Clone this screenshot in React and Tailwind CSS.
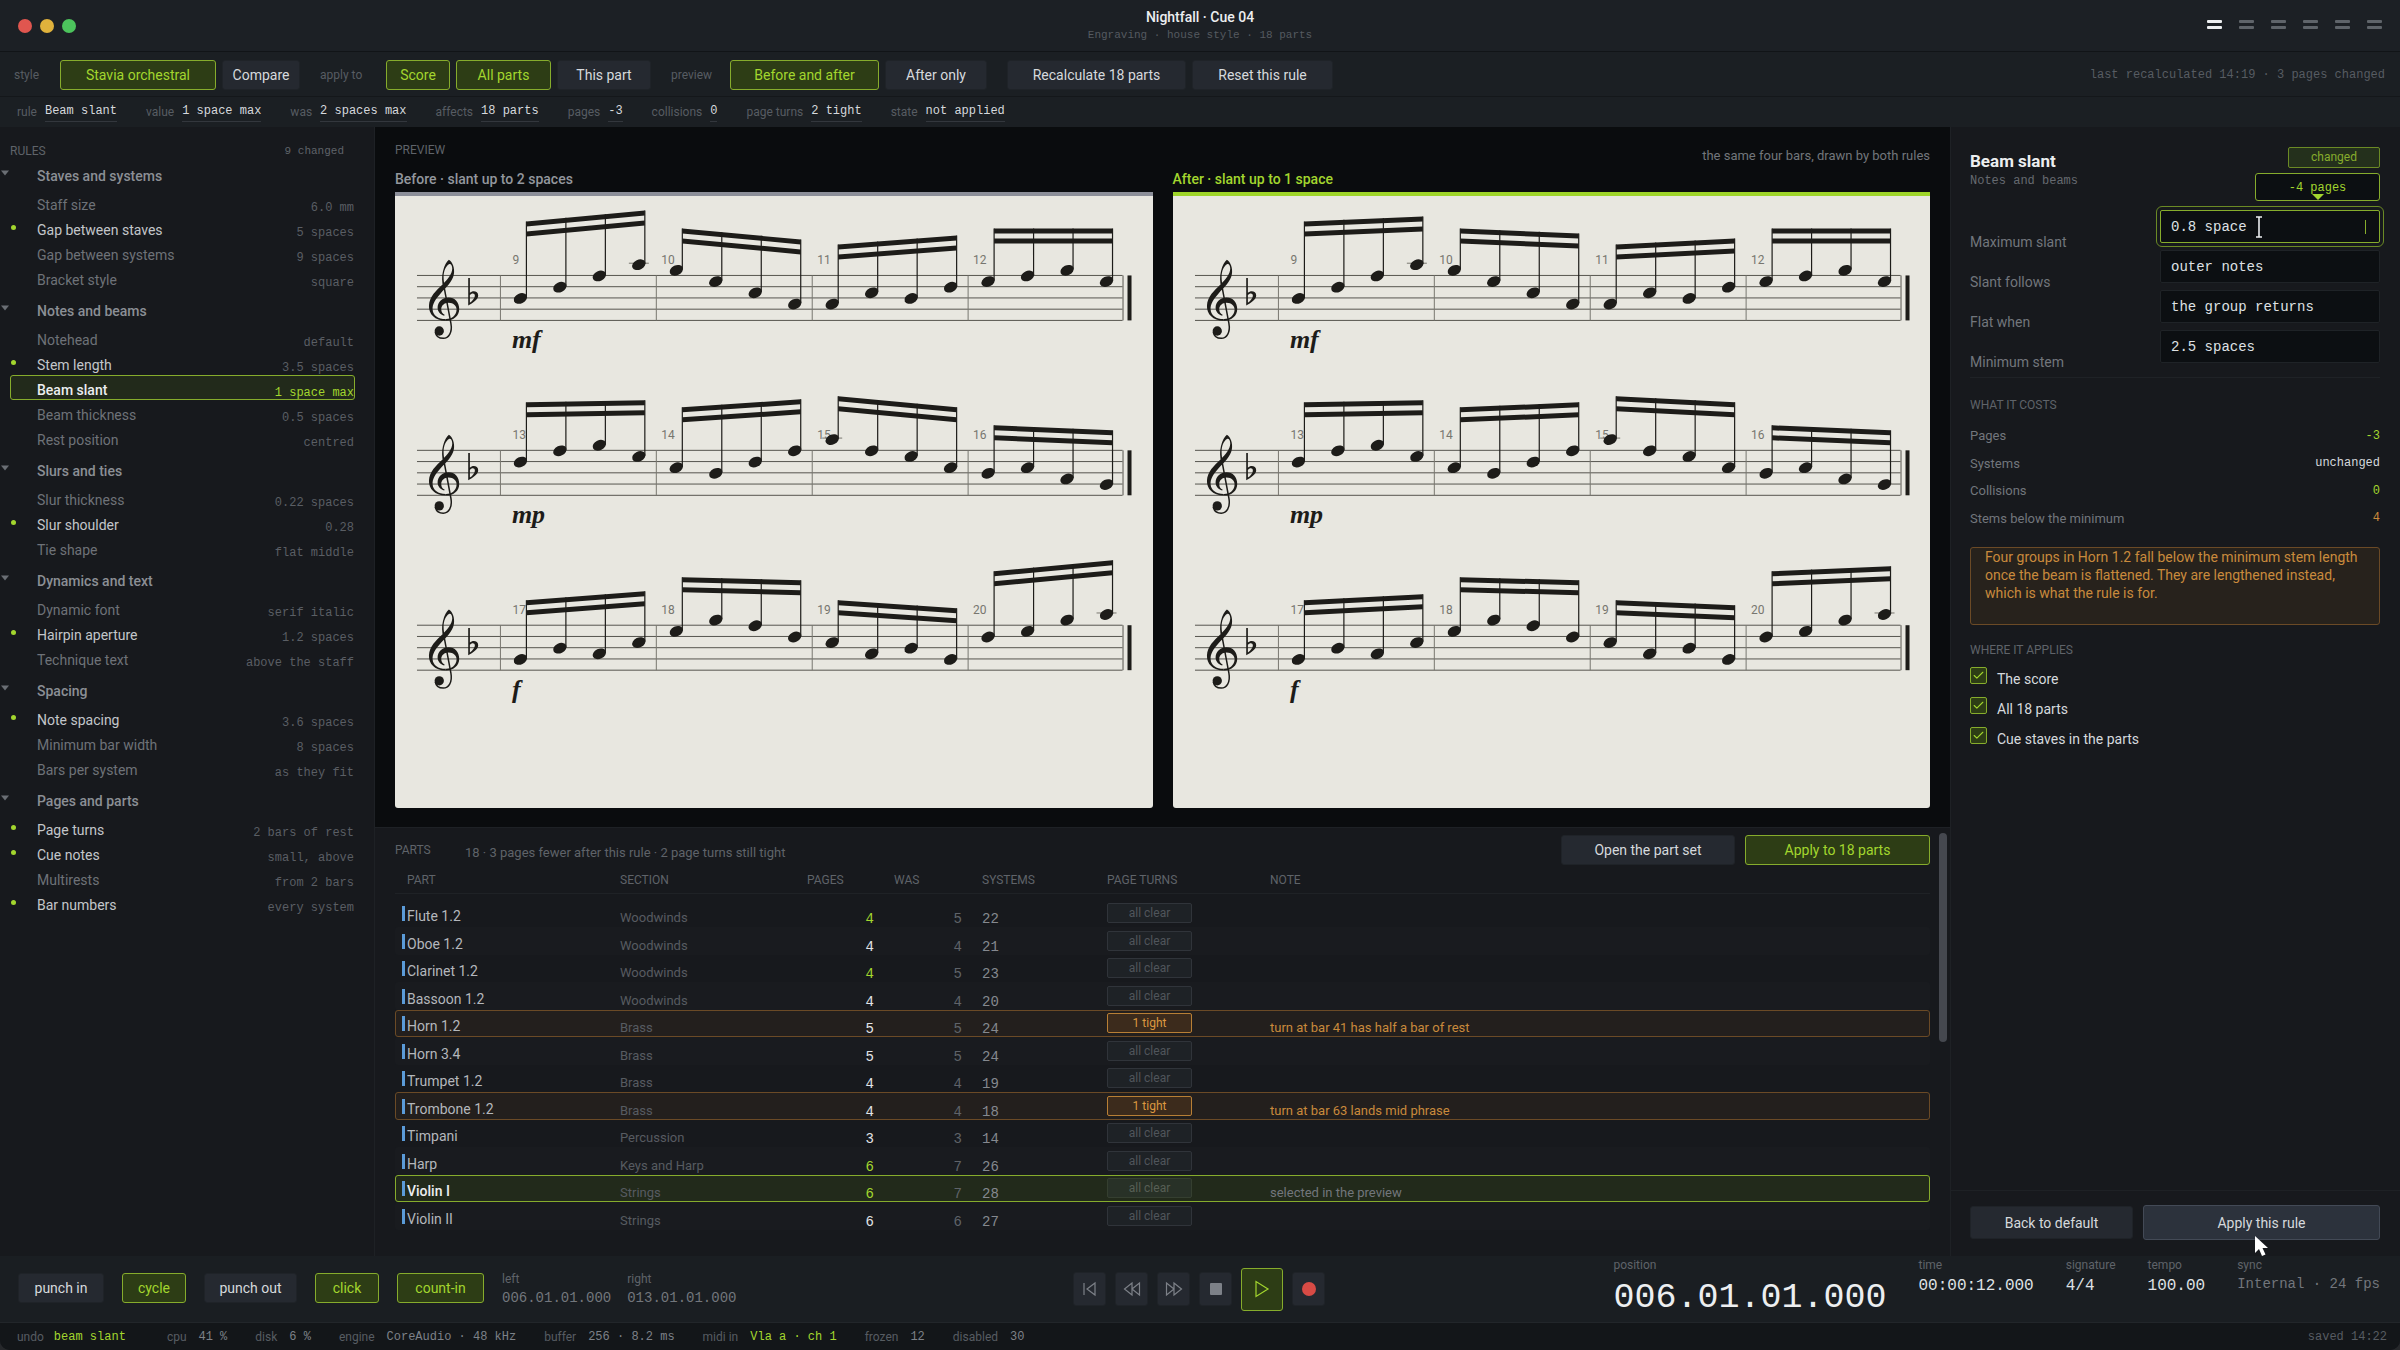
import { Check } from 'lucide-react';
import clsx from 'clsx';

const MONO = "font-['Liberation_Mono',monospace]";

const RULE_GROUPS = [
  {
    name: 'Staves and systems',
    rules: [
      { name: 'Staff size', value: '6.0 mm' },
      { name: 'Gap between staves', value: '5 spaces', changed: true },
      { name: 'Gap between systems', value: '9 spaces' },
      { name: 'Bracket style', value: 'square' },
    ],
  },
  {
    name: 'Notes and beams',
    rules: [
      { name: 'Notehead', value: 'default' },
      { name: 'Stem length', value: '3.5 spaces', changed: true },
      { name: 'Beam slant', value: '1 space max', selected: true },
      { name: 'Beam thickness', value: '0.5 spaces' },
      { name: 'Rest position', value: 'centred' },
    ],
  },
  {
    name: 'Slurs and ties',
    rules: [
      { name: 'Slur thickness', value: '0.22 spaces' },
      { name: 'Slur shoulder', value: '0.28', changed: true },
      { name: 'Tie shape', value: 'flat middle' },
    ],
  },
  {
    name: 'Dynamics and text',
    rules: [
      { name: 'Dynamic font', value: 'serif italic' },
      { name: 'Hairpin aperture', value: '1.2 spaces', changed: true },
      { name: 'Technique text', value: 'above the staff' },
    ],
  },
  {
    name: 'Spacing',
    rules: [
      { name: 'Note spacing', value: '3.6 spaces', changed: true },
      { name: 'Minimum bar width', value: '8 spaces' },
      { name: 'Bars per system', value: 'as they fit' },
    ],
  },
  {
    name: 'Pages and parts',
    rules: [
      { name: 'Page turns', value: '2 bars of rest', changed: true },
      { name: 'Cue notes', value: 'small, above', changed: true },
      { name: 'Multirests', value: 'from 2 bars' },
      { name: 'Bar numbers', value: 'every system', changed: true },
    ],
  },
];

// steps count up from the bottom staff line, beam heights are measured from the top line
const SYSTEMS = [
  {
    dynamic: 'mf',
    bars: [
      { number: 9, steps: [4, 6, 8, 10], left: -54, before: -65, after: -59 },
      { number: 10, steps: [9, 7, 5, 3], left: -47, before: -36, after: -42 },
      { number: 11, steps: [3, 5, 4, 6], left: -31, before: -40, after: -37 },
      { number: 12, steps: [7, 8, 9, 7], left: -47, before: -47, after: -47 },
    ],
  },
  {
    dynamic: 'mp',
    bars: [
      { number: 13, steps: [6, 8, 9, 7], left: -48, before: -50, after: -50 },
      { number: 14, steps: [5, 4, 6, 8], left: -43, before: -51, after: -48 },
      { number: 15, steps: [10, 8, 7, 5], left: -54, before: -43, after: -48 },
      { number: 16, steps: [4, 5, 3, 2], left: -25, before: -20, after: -20 },
    ],
  },
  {
    dynamic: 'f',
    bars: [
      { number: 17, steps: [2, 4, 3, 5], left: -25, before: -34, after: -31 },
      { number: 18, steps: [7, 9, 8, 6], left: -48, before: -45, after: -45 },
      { number: 19, steps: [5, 3, 4, 2], left: -25, before: -17, after: -20 },
      { number: 20, steps: [6, 7, 9, 10], left: -54, before: -65, after: -59 },
    ],
  },
];

const PARTS = [
  { name: 'Flute 1.2', section: 'Woodwinds', pages: 4, was: 5, systems: 22 },
  { name: 'Oboe 1.2', section: 'Woodwinds', pages: 4, was: 4, systems: 21 },
  { name: 'Clarinet 1.2', section: 'Woodwinds', pages: 4, was: 5, systems: 23 },
  { name: 'Bassoon 1.2', section: 'Woodwinds', pages: 4, was: 4, systems: 20 },
  { name: 'Horn 1.2', section: 'Brass', pages: 5, was: 5, systems: 24, tight: true, note: 'turn at bar 41 has half a bar of rest' },
  { name: 'Horn 3.4', section: 'Brass', pages: 5, was: 5, systems: 24 },
  { name: 'Trumpet 1.2', section: 'Brass', pages: 4, was: 4, systems: 19 },
  { name: 'Trombone 1.2', section: 'Brass', pages: 4, was: 4, systems: 18, tight: true, note: 'turn at bar 63 lands mid phrase' },
  { name: 'Timpani', section: 'Percussion', pages: 3, was: 3, systems: 14 },
  { name: 'Harp', section: 'Keys and Harp', pages: 6, was: 7, systems: 26 },
  { name: 'Violin I', section: 'Strings', pages: 6, was: 7, systems: 28, selected: true, note: 'selected in the preview' },
  { name: 'Violin II', section: 'Strings', pages: 6, was: 6, systems: 27 },
];

const INFO = [
  ['rule', 'Beam slant'],
  ['value', '1 space max'],
  ['was', '2 spaces max'],
  ['affects', '18 parts'],
  ['pages', '-3'],
  ['collisions', '0'],
  ['page turns', '2 tight'],
  ['state', 'not applied'],
];

const STATUS = [
  ['cpu', '41 %'],
  ['disk', '6 %'],
  ['engine', 'CoreAudio · 48 kHz'],
  ['buffer', '256 · 8.2 ms'],
  ['midi in', 'Vla a · ch 1', true],
  ['frozen', '12'],
  ['disabled', '30'],
];

const Button = ({ active, className, children }) => (
  <button
    type="button"
    className={clsx(
      'h-[30px] shrink-0 rounded-[3px] border text-sm whitespace-nowrap',
      active
        ? 'border-[#86ac2c] bg-[#2d3d15] text-[#a3d62e]'
        : 'border-[#1f2328] bg-[#252930] text-[#d6d9dd]',
      className,
    )}
  >
    {children}
  </button>
);

const TitleBar = () => (
  <header className="grid h-[52px] grid-cols-[1fr_auto_1fr] items-start border-b border-[#111417] bg-[#1c2025]">
    <div className="flex gap-2 pt-[19px] pl-[18px]">
      <span className="size-[14px] rounded-full bg-[#e0564f]" />
      <span className="size-[14px] rounded-full bg-[#e0b23c]" />
      <span className="size-[14px] rounded-full bg-[#4cc35c]" />
    </div>
    <div className="pt-[7px] text-center">
      <h1 className="text-sm leading-5 font-medium text-[#eceef0]">Nightfall · Cue 04</h1>
      <p className={clsx(MONO, 'text-[11px] leading-4 text-[#555a60]')}>Engraving · house style · 18 parts</p>
    </div>
    <nav className="flex justify-end gap-[17px] pt-5 pr-[18px]">
      {[0, 1, 2, 3, 4, 5].map((i) => (
        <button key={i} type="button" aria-label={`View ${i + 1}`} className="flex w-[15px] flex-col gap-[3px]">
          <span className={clsx('h-[3px] w-full rounded-[1px]', i === 0 ? 'bg-[#eceef0]' : 'bg-[#5f646a]')} />
          <span className={clsx('h-[3px] w-full rounded-[1px]', i === 0 ? 'bg-[#eceef0]' : 'bg-[#5f646a]')} />
        </button>
      ))}
    </nav>
  </header>
);

const Toolbar = () => (
  <div className="flex h-[45px] items-center border-b border-[#14171a] bg-[#1b1f23] pt-[2px] pr-[15px] pl-[14px] text-xs text-[#575c62]">
    <span className="w-[46px]">style</span>
    <div className="flex gap-[6px]">
      <Button active className="w-[156px]">Stavia orchestral</Button>
      <Button className="w-[78px]">Compare</Button>
    </div>
    <span className="ml-5 w-[66px]">apply to</span>
    <div className="flex gap-[6px]">
      <Button active className="w-16">Score</Button>
      <Button active className="w-[95px]">All parts</Button>
      <Button className="w-[94px]">This part</Button>
    </div>
    <span className="ml-5 w-[59px]">preview</span>
    <div className="flex gap-[6px]">
      <Button active className="w-[149px]">Before and after</Button>
      <Button className="w-[102px]">After only</Button>
    </div>
    <div className="ml-5 flex gap-[6px]">
      <Button className="w-[179px]">Recalculate 18 parts</Button>
      <Button className="w-[141px]">Reset this rule</Button>
    </div>
    <span className={clsx(MONO, 'ml-auto')}>last recalculated 14:19 · 3 pages changed</span>
  </div>
);

const InfoBar = () => (
  <dl className="flex h-[30px] items-start gap-[29px] bg-[#1b1f23] pt-[5px] pl-[17px] text-xs">
    {INFO.map(([label, value]) => (
      <div key={label} className="flex gap-2">
        <dt className="leading-5 text-[#575c62]">{label}</dt>
        <dd className={clsx(MONO, 'border-b border-[#33373d] leading-[19px] text-[#d6d9dd]')}>{value}</dd>
      </div>
    ))}
  </dl>
);

const RuleRow = ({ rule }) => (
  <button
    type="button"
    className={clsx(
      'relative flex h-[25px] w-full items-end justify-between rounded-[3px] border pl-[26px]',
      rule.selected ? 'border-[#86ac2c] bg-[#222a1b]' : 'border-transparent',
    )}
  >
    {rule.changed && <span className="absolute top-[9px] left-0 size-[5px] rounded-full bg-[#a3d62e]" />}
    <span
      className={clsx(
        'text-sm leading-[18px]',
        rule.selected ? 'font-medium text-[#eceef0]' : rule.changed ? 'text-[#c3c6ca]' : 'text-[#6e7278]',
      )}
    >
      {rule.name}
    </span>
    <span className={clsx(MONO, 'text-xs leading-3', rule.selected ? 'text-[#a3d62e]' : 'text-[#5a5e64]')}>
      {rule.value}
    </span>
  </button>
);

const Sidebar = () => (
  <aside className="w-[375px] shrink-0 border-r border-[#1e2125] bg-[#17191d]">
    <div className="flex h-7 items-end justify-between pr-[30px] pl-[10px] leading-2 text-[#5f6369]">
      <h2 className="text-xs leading-2">RULES</h2>
      <span className={clsx(MONO, 'text-[11px]')}>9 changed</span>
    </div>
    {RULE_GROUPS.map((group) => (
      <section key={group.name}>
        <h3 className="flex h-[35px] items-end pb-1 pl-px">
          <svg viewBox="0 0 8 6" className="mb-[10px] h-[6px] w-2 fill-[#6a6e74]">
            <path d="M0 0.5h8L4 5.5Z" />
          </svg>
          <span className="pl-7 text-sm leading-5 font-medium text-[#8b8f95]">{group.name}</span>
        </h3>
        <div className="pr-[19px] pl-[10px]">
          {group.rules.map((rule) => (
            <RuleRow key={rule.name} rule={rule} />
          ))}
        </div>
      </section>
    ))}
  </aside>
);

const Clef = () => (
  <g transform="scale(0.333) translate(-45 -346)" fill="#1d1c19">
    <path d="M207 299C218 305 225 325 222 342C218 366 198 382 182 400C166 418 157 432 158 448C159 466 175 477 197 477L197 482C165 482 146 462 147 437C148 410 168 392 187 374C205 356 216 342 217 326C217 315 212 309 207 312C198 318 191 332 191 350C191 362 193 372 195 382L190 384C186 366 185 350 189 334C193 316 200 304 207 299Z" />
    <path d="M197 477C213 478 229 468 230 450C231 438 221 428 206 428C193 428 184 437 184 447C184 456 187 461 194 464L193 467C181 464 173 454 173 443C173 426 187 412 206 412C225 412 238 426 238 447C238 468 220 483 197 482Z" />
    <path d="M192 378L213 490C218 518 206 535 190 535C176 535 168 527 166 516" fill="none" stroke="#1d1c19" strokeWidth="4.5" />
    <circle cx="178" cy="513" r="14" />
    <path d="M265 354h5v44c8-8 25-6 25 8c0 13-16 22-30 30ZM270 405v23c8-6 15-14 15-21c0-9-10-9-15-2Z" fillRule="evenodd" />
  </g>
);

const SPACE = 11.25;
const BAR = 156;
const STEM_GAP = 39.5;

const Bar = ({ bar, x, numberX, version }) => {
  const first = x + 26;
  const right = bar[version];
  const beamAt = (i) => bar.left + ((right - bar.left) * i) / 3;
  const last = first + STEM_GAP * 3;
  return (
    <g>
      <line x1={x} x2={x} y1="0" y2={SPACE * 4} stroke="#77766f" />
      <text x={numberX} y="-11" fontSize="12" fill="#77766f">{bar.number}</text>
      {[0, 10].map((dy) => (
        <polygon
          key={dy}
          fill="#1d1c19"
          points={`${first},${bar.left + dy} ${last},${right + dy} ${last},${right + dy + 5} ${first},${bar.left + dy + 5}`}
        />
      ))}
      {bar.steps.map((step, i) => {
        const sx = first + STEM_GAP * i;
        const y = (8 - step) * (SPACE / 2) + 0.5;
        return (
          <g key={i}>
            {step >= 10 && <line x1={sx - 16} x2={sx + 4} y1={y - 1.5} y2={y - 1.5} stroke="#77766f" />}
            <line x1={sx} x2={sx} y1={beamAt(i)} y2={y - 1} stroke="#1d1c19" strokeWidth="1.2" />
            <ellipse cx={sx - 6} cy={y} rx="7" ry="5" fill="#1d1c19" transform={`rotate(-25 ${sx - 6} ${y})`} />
          </g>
        );
      })}
    </g>
  );
};

const Sheet = ({ version }) => (
  <svg viewBox="0 0 758 612" className="block w-full rounded-b-[3px] bg-[#e8e7e0]">
    {SYSTEMS.map((system, row) => (
      <g key={system.dynamic} transform={`translate(0 ${79.5 + row * 175})`}>
        {[0, 1, 2, 3, 4].map((n) => (
          <line key={n} x1="22" x2="728" y1={n * SPACE} y2={n * SPACE} stroke="#55544e" />
        ))}
        <Clef />
        {system.bars.map((bar, i) => {
          const x = 105.5 + i * BAR;
          return <Bar key={bar.number} bar={bar} x={x} numberX={i === 0 ? x + 12 : x + 5} version={version} />;
        })}
        <line x1="728.5" x2="728.5" y1="0" y2={SPACE * 4} stroke="#55544e" />
        <rect x="733" y="0" width="4" height={SPACE * 4} fill="#1d1c19" />
        <text
          x="117"
          y="73"
          fontSize="26"
          fill="#1d1c19"
          className="font-['Liberation_Serif',serif] font-bold italic"
        >
          {system.dynamic}
        </text>
      </g>
    ))}
  </svg>
);

const Preview = () => (
  <section className="bg-[#0a0c0e] px-5 pb-[19px]">
    <div className="flex h-[42px] items-start justify-between pt-[15px]">
      <h2 className="text-xs leading-4 text-[#5f6369]">PREVIEW</h2>
      <p className="text-[13px] leading-7 text-[#72767b]">the same four bars, drawn by both rules</p>
    </div>
    <div className="grid grid-cols-2 gap-5">
      <figure>
        <figcaption className="mb-[3px] text-sm leading-5 font-medium text-[#93979d]">Before · slant up to 2 spaces</figcaption>
        <div className="border-t-4 border-[#8c8f99]">
          <Sheet version="before" />
        </div>
      </figure>
      <figure>
        <figcaption className="mb-[3px] text-sm leading-5 font-medium text-[#a3d62e]">After · slant up to 1 space</figcaption>
        <div className="border-t-4 border-[#9fd52a]">
          <Sheet version="after" />
        </div>
      </figure>
    </div>
  </section>
);

const COLUMNS = 'grid grid-cols-[213px_187px_87px_88px_125px_163px_1fr]';

const PartRow = ({ part, index }) => (
  <tr
    className={clsx(
      COLUMNS,
      'items-end rounded-[3px] border pl-[11px]',
      part.selected && 'border-[#86ac2c] bg-[#222a1b]',
      part.tight && 'border-[#6b4a26] bg-[#231f1d]',
      !part.selected && !part.tight && 'border-transparent',
      !part.selected && !part.tight && index % 2 === 1 && 'bg-[#191b1f]',
    )}
  >
    <td
      className={clsx(
        '-ml-[5px] flex gap-[2px] text-sm leading-5',
        part.selected ? 'font-medium text-[#eceef0]' : 'text-[#b4b7bc]',
      )}
    >
      <span className="h-[15px] w-[3px] bg-[#5b9bd8]" />
      {part.name}
    </td>
    <td className="text-[13px] leading-4 text-[#575b61]">{part.section}</td>
    <td
      className={clsx(
        MONO,
        'pr-5 text-right text-sm leading-[14px]',
        part.pages < part.was ? 'text-[#a3d62e]' : 'text-[#e2e4e7]',
      )}
    >
      {part.pages}
    </td>
    <td className={clsx(MONO, 'pr-5 text-right text-sm leading-[14px] text-[#5f6369]')}>{part.was}</td>
    <td className={clsx(MONO, 'text-sm leading-[14px] text-[#85898f]')}>{part.systems}</td>
    <td className="self-center">
      <span
        className={clsx(
          'block h-5 w-[85px] rounded-[2px] border text-center text-xs leading-[18px]',
          part.tight && 'border-[#b87f35] bg-[#3c2b1c] text-[#dc9840]',
          part.selected && 'border-[#353f30] bg-[#283127] text-[#575f55]',
          !part.tight && !part.selected && 'border-[#30343a] bg-[#1e2226] text-[#50555b]',
        )}
      >
        {part.tight ? '1 tight' : 'all clear'}
      </span>
    </td>
    <td className={clsx('text-[13px] leading-4', part.tight ? 'text-[#c98a3c]' : 'text-[#72767b]')}>{part.note}</td>
  </tr>
);

const PartsPanel = () => (
  <section className="relative flex-1 border-t border-[#1e2125] bg-[#17191d] px-5 pt-[7px] pb-[26px]">
    <div className="flex h-[30px] items-start">
      <h2 className="w-[70px] text-xs leading-[30px] text-[#5f6369]">PARTS</h2>
      <p className="text-[13px] leading-9 text-[#5f6369]">18 · 3 pages fewer after this rule · 2 page turns still tight</p>
      <div className="ml-auto flex gap-[10px]">
        <Button className="w-[174px]">Open the part set</Button>
        <Button active className="w-[185px]">Apply to 18 parts</Button>
      </div>
    </div>
    <table className="block w-full">
      <thead className="block">
        <tr className={clsx(COLUMNS, 'mb-[6px] border-b border-[#1f2226] pl-3 text-left text-xs leading-[26px] text-[#5f6369]')}>
          <th className="pt-[2px] font-normal">PART</th>
          <th className="pt-[2px] font-normal">SECTION</th>
          <th className="pt-[2px] font-normal">PAGES</th>
          <th className="pt-[2px] font-normal">WAS</th>
          <th className="pt-[2px] font-normal">SYSTEMS</th>
          <th className="pt-[2px] font-normal">PAGE TURNS</th>
          <th className="pt-[2px] font-normal">NOTE</th>
        </tr>
      </thead>
      <tbody className="grid h-[330px] grid-rows-12">
        {PARTS.map((part, index) => (
          <PartRow key={part.name} part={part} index={index} />
        ))}
      </tbody>
    </table>
    <div className="absolute top-[5px] right-[3px] h-[209px] w-2 rounded-full bg-[#45484f]" />
  </section>
);

const FIELDS = [
  { id: 'max-slant', label: 'Maximum slant', value: '0.8 space', focused: true },
  { id: 'slant-follows', label: 'Slant follows', value: 'outer notes' },
  { id: 'flat-when', label: 'Flat when', value: 'the group returns' },
  { id: 'min-stem', label: 'Minimum stem', value: '2.5 spaces' },
];

const COSTS = [
  ['Pages', '-3', 'text-[#a3d62e]'],
  ['Systems', 'unchanged', 'text-[#d6d9dd]'],
  ['Collisions', '0', 'text-[#a3d62e]'],
  ['Stems below the minimum', '4', 'text-[#c98a3c]'],
];

const Field = ({ field }) => (
  <div className="relative grid h-10 grid-cols-[190px_1fr] items-start">
    <label htmlFor={field.id} className="self-end text-sm leading-4 text-[#72767c]">
      {field.label}
    </label>
    <input
      id={field.id}
      type="text"
      defaultValue={field.value}
      className={clsx(
        MONO,
        'h-[33px] w-full rounded-[2px] border bg-[#0c0f12] px-[10px] text-sm text-[#dfe1e4]',
        field.focused
          ? 'border-[#86ac2c] outline outline-offset-[3px] outline-[#6b8a25]'
          : 'border-[#1f2327]',
      )}
    />
    {field.focused && (
      <>
        <span className="absolute top-[10px] right-[14px] h-[14px] w-px bg-[#86ac2c]" />
        <svg viewBox="0 0 8 22" className="absolute top-[6px] left-[285px] h-[22px] w-2" fill="none" stroke="#eceef0" strokeWidth="1.6">
          <path d="M1 1h6M4 1v20M1 21h6" />
        </svg>
      </>
    )}
  </div>
);

const Inspector = () => (
  <aside className="flex w-[450px] shrink-0 flex-col border-l border-[#1e2125] bg-[#17191d]">
    <div className="flex-1 pr-5 pl-[19px]">
      <div className="flex h-[83px] items-start justify-between">
        <div className="pt-[23px]">
          <h2 className="text-[17px] leading-[22px] font-bold text-[#eceef0]">Beam slant</h2>
          <p className={clsx(MONO, 'text-xs leading-[18px] text-[#666a70]')}>Notes and beams</p>
        </div>
        <div className="flex flex-col items-end gap-[5px] pt-5">
          <span className="h-[21px] w-[92px] rounded-[2px] border border-[#6b8a25] bg-[#24301c] text-center text-xs leading-[19px] text-[#86ac2c]">
            changed
          </span>
          <output
            className={clsx(
              MONO,
              'relative block h-7 w-[125px] rounded-[3px] border border-[#86ac2c] bg-[#0c0f12] text-center text-xs leading-7 text-[#a3d62e]',
            )}
          >
            -4 pages
            <svg viewBox="0 0 12 6" className="absolute bottom-0 left-[56px] h-[6px] w-3 fill-[#a3d62e]">
              <path d="M0 0h12L6 6Z" />
            </svg>
          </output>
        </div>
      </div>
      <div>
        {FIELDS.map((field) => (
          <Field key={field.id} field={field} />
        ))}
      </div>
      <h3 className="mt-[7px] border-t border-[#1f2226] pt-[18px] text-xs leading-[18px] text-[#5f6369]">WHAT IT COSTS</h3>
      <dl className="mt-2 grid h-[110px] grid-rows-4">
        {COSTS.map(([label, value, tone]) => (
          <div key={label} className="flex items-center justify-between">
            <dt className="text-[13px] text-[#72767c]">{label}</dt>
            <dd className={clsx(MONO, 'text-xs', tone)}>{value}</dd>
          </div>
        ))}
      </dl>
      <p className="mt-[15px] h-[78px] rounded-[3px] border border-[#6b4a26] bg-[#27221c] px-[14px] text-sm leading-[18px] text-[#c98a3c]">
        Four groups in Horn 1.2 fall below the minimum stem length once the beam is flattened. They are lengthened
        instead, which is what the rule is for.
      </p>
      <h3 className="mt-4 mb-2 text-xs leading-[18px] text-[#5f6369]">WHERE IT APPLIES</h3>
      {['The score', 'All 18 parts', 'Cue staves in the parts'].map((scope) => (
        <label key={scope} className="flex h-[30px] items-start gap-[10px] text-sm leading-6 text-[#d6d9dd]">
          <span className="relative">
            <input
              type="checkbox"
              defaultChecked
              className="block size-[17px] appearance-none rounded-[2px] border border-[#86ac2c] bg-[#2d3d15]"
            />
            <Check className="pointer-events-none absolute top-[2px] left-[2px] size-[13px] text-[#a3d62e]" />
          </span>
          {scope}
        </label>
      ))}
    </div>
    <div className="flex gap-[10px] border-t border-[#1e2125] pt-[14px] pr-5 pb-4 pl-[19px]">
      <Button className="my-px h-[33px] w-[163px]">Back to default</Button>
      <button
        type="button"
        className="relative h-[35px] flex-1 rounded-[3px] border border-[#434a56] bg-[#2c323c] text-sm text-[#d6d9dd]"
      >
        Apply this rule
        <svg viewBox="0 0 14 20" className="absolute top-[30px] left-[110px] h-5 w-[14px] fill-white">
          <path d="M1 0v17l4-4l3 7l3.5-1.5l-3-6.5H14Z" />
        </svg>
      </button>
    </div>
  </aside>
);

const Readout = ({ label, className, children }) => (
  <div>
    <div className="text-xs leading-[18px] text-[#5f6369]">{label}</div>
    <div className={clsx(MONO, className)}>{children}</div>
  </div>
);

const TransportButton = ({ label, play, children }) => (
  <button
    type="button"
    aria-label={label}
    className={clsx(
      'flex items-center justify-center rounded-[3px] border',
      play ? 'h-[43px] w-[42px] border-[#86ac2c] bg-[#2d3d15]' : 'h-[34px] w-[33px] border-[#1f2328] bg-[#252930]',
    )}
  >
    <svg viewBox="0 0 18 18" className="size-[18px]" fill="none" stroke={play ? '#a3d62e' : '#7d8188'} strokeWidth="1.2">
      {children}
    </svg>
  </button>
);

const Transport = () => (
  <div className="grid h-[66px] grid-cols-[1fr_auto_1fr] bg-[#1a1e22] pr-5 pl-[18px]">
    <div className="flex items-start gap-[18px] pt-[17px]">
      <Button className="w-[86px]">punch in</Button>
      <Button active className="w-16">cycle</Button>
      <Button className="w-[93px]">punch out</Button>
      <Button active className="w-16">click</Button>
      <Button active className="w-[87px]">count-in</Button>
      <div className="-mt-[3px] flex gap-4">
        <Readout label="left" className="text-sm leading-5 text-[#72767c]">006.01.01.000</Readout>
        <Readout label="right" className="text-sm leading-5 text-[#72767c]">013.01.01.000</Readout>
      </div>
    </div>
    <div className="flex items-center gap-[9px]">
      <TransportButton label="To start">
        <path d="M3 3v12M14 3v12L6 9Z" />
      </TransportButton>
      <TransportButton label="Rewind">
        <path d="M9 3v12L1.500 9ZM16.500 3v12L9 9Z" />
      </TransportButton>
      <TransportButton label="Forward">
        <path d="M9 3v12l7.500-6ZM1.500 3v12L9 9Z" />
      </TransportButton>
      <TransportButton label="Stop">
        <rect x="3" y="3" width="12" height="12" rx="1" fill="#7d8188" stroke="none" />
      </TransportButton>
      <TransportButton label="Play" play>
        <path d="M3 1.500v15L15 9Z" />
      </TransportButton>
      <TransportButton label="Record">
        <circle cx="9" cy="9" r="7" fill="#d84b45" stroke="none" />
      </TransportButton>
    </div>
    <div className="flex justify-end gap-8">
      <Readout label="position" className="text-[35px] leading-[48px] text-[#eceef0]">006.01.01.000</Readout>
      <Readout label="time" className="text-base leading-6 text-[#dfe1e4]">00:00:12.000</Readout>
      <Readout label="signature" className="text-base leading-6 text-[#dfe1e4]">4/4</Readout>
      <Readout label="tempo" className="text-base leading-6 text-[#dfe1e4]">100.00</Readout>
      <Readout label="sync" className="text-sm leading-5 text-[#72767c]">Internal · 24 fps</Readout>
    </div>
  </div>
);

const StatusBar = () => (
  <footer className="flex h-7 items-center border-t border-[#22262a] bg-[#131619] pr-[13px] pl-[17px] text-xs text-[#575c62]">
    <span>undo</span>
    <span className={clsx(MONO, 'mr-[41px] ml-[10px] text-[#a3d62e]')}>beam slant</span>
    <div className="flex gap-7">
      {STATUS.map(([label, value, lit]) => (
        <div key={label} className="flex gap-3">
          <span>{label}</span>
          <span className={clsx(MONO, lit ? 'text-[#a3d62e]' : 'text-[#7d8188]')}>{value}</span>
        </div>
      ))}
    </div>
    <span className={clsx(MONO, 'ml-auto')}>saved 14:22</span>
  </footer>
);

const App = () => {
  return (
    <div className="bg-[#26282b] font-['Roboto',sans-serif]">
      <div className="flex min-h-screen flex-col overflow-hidden rounded-b-[10px] bg-[#17191d]">
        <TitleBar />
        <Toolbar />
        <InfoBar />
        <div className="flex flex-1">
          <Sidebar />
          <main className="flex min-w-0 flex-1 flex-col">
            <Preview />
            <PartsPanel />
          </main>
          <Inspector />
        </div>
        <Transport />
        <StatusBar />
      </div>
    </div>
  );
};

export default App;
